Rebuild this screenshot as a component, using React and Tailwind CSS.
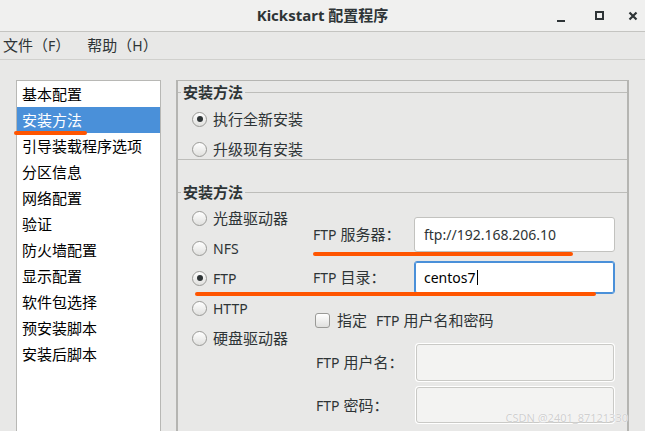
import React from "react";

const NAV = [
  "基本配置",
  "安装方法",
  "引导装载程序选项",
  "分区信息",
  "网络配置",
  "验证",
  "防火墙配置",
  "显示配置",
  "软件包选择",
  "预安装脚本",
  "安装后脚本",
];

const SOURCES = [
  { label: "光盘驱动器" },
  { label: "NFS", latin: true },
  { label: "FTP", latin: true, checked: true },
  { label: "HTTP", latin: true },
  { label: "硬盘驱动器" },
];

const Radio = ({ label, checked, latin }) => (
  <div className="flex h-[16px] items-center gap-[6px]">
    <span className="flex h-[15px] w-[15px] items-center justify-center rounded-full border border-[#9a9a97] bg-linear-to-b from-white to-[#e0e0de]">
      {checked ? <span className="h-[6px] w-[6px] rounded-full bg-[#2e3436]" /> : null}
    </span>
    <span className={latin ? "text-[14px]" : ""}>{label}</span>
  </div>
);

// small "FTP" prefix in labels uses the latin size
const Ftp = ({ children }) => (
  <>
    <span className="text-[14px]">FTP</span> {children}
  </>
);

export default function App() {
  return (
    <div className="relative flex h-[431px] w-[645px] flex-col overflow-hidden bg-[#e8e8e7] font-['Noto_Sans','Noto_Sans_CJK_SC',sans-serif] text-[15px] text-[#2e3436]">
      {/* Title bar */}
      <div className="grid h-[32px] shrink-0 grid-cols-[1fr_auto_1fr] items-center border-b border-[#c4c4c1] bg-[#f0f0ef]">
        <div />
        <div className="font-bold">Kickstart 配置程序</div>
        <div className="flex items-center justify-end">
          <span className="mr-[30px] mt-[10px] h-[2px] w-[8px] bg-[#2e3436]" />
          <span className="mr-[24px] h-[9px] w-[9px] border-2 border-[#2e3436]" />
          <svg width="10" height="10" viewBox="0 0 10 10" className="mr-[7px]">
            <path d="M1.5 1.5 L8.5 8.5 M8.5 1.5 L1.5 8.5" stroke="#2e3436" strokeWidth="2.2" />
          </svg>
        </div>
      </div>

      {/* Menu bar */}
      <div className="flex h-[28px] shrink-0 items-center gap-[17px] border-b border-[#d0d0cd] pl-[3px]">
        <span>文件（<span className="text-[14px]">F</span>）</span>
        <span>帮助（<span className="text-[14px]">H</span>）</span>
      </div>

      {/* Body */}
      <div className="flex flex-1 gap-[15px] pl-[16px] pt-[20px]">
        {/* Section list */}
        <div className="w-[145px] border border-b-0 border-[#b8b8b5] bg-white text-black">
          {NAV.map((item, i) => (
            <div
              key={item}
              className={`flex h-[26px] items-center pl-[5px] ${i === 1 ? "bg-[#4a90d9] text-white" : ""}`}
            >
              {item}
            </div>
          ))}
        </div>

        {/* Settings panel */}
        <div className="w-[453px] border-x-2 border-t border-[#b5b5b2]">
          {/* Frame 1 */}
          <div className="flex h-[22px] items-center">
            <span className="h-px w-[3px] bg-[#bdbdba]" />
            <span className="px-[2px] font-bold">安装方法</span>
            <span className="h-px flex-1 bg-[#bdbdba]" />
          </div>
          <div className="flex flex-col gap-[14px] border-b border-[#bdbdba] pb-[2px] pl-[14px] pt-[8px]">
            <Radio label="执行全新安装" checked />
            <Radio label="升级现有安装" />
          </div>

          {/* Frame 2 */}
          <div className="mt-[21px] flex h-[22px] items-center">
            <span className="h-px w-[3px] bg-[#bdbdba]" />
            <span className="px-[2px] font-bold">安装方法</span>
            <span className="h-px flex-1 bg-[#bdbdba]" />
          </div>
          <div className="flex">
            <div className="flex w-[135px] flex-col gap-[14px] pl-[14px] pt-[7px]">
              {SOURCES.map((s) => (
                <Radio key={s.label} {...s} />
              ))}
            </div>

            <div className="flex flex-col pt-[14px]">
              <div className="flex h-[35px] items-center">
                <span className="w-[101px]">
                  <Ftp>服务器：</Ftp>
                </span>
                <div className="flex h-[35px] w-[201px] items-center rounded-[3px] border border-[#c2c2bf] bg-white pl-[9px] text-[14px]">
                  ftp://192.168.206.10
                </div>
              </div>

              <div className="mt-[9px] flex h-[33px] items-center">
                <span className="w-[101px]">
                  <Ftp>目录：</Ftp>
                </span>
                <div className="flex h-[33px] w-[201px] items-center rounded-[3px] border border-[#4a90d9] bg-white pl-[9px] text-[14px] text-black shadow-[inset_0_0_0_1px_#4a90d9]">
                  centos7
                  <span className="ml-px h-[15px] w-px bg-black" />
                </div>
              </div>

              <div className="ml-[2px] mt-[18px] flex h-[16px] items-center gap-[7px]">
                <span className="h-[15px] w-[15px] rounded-[3px] border border-[#9a9a97] bg-linear-to-b from-white to-[#e0e0de]" />
                <span>
                  指定<span className="ml-[9px] text-[14px]">FTP</span> 用户名和密码
                </span>
              </div>

              <div className="mt-[16px] flex h-[37px] items-center pl-[3px]">
                <span className="w-[100px]">
                  <Ftp>用户名：</Ftp>
                </span>
                <div className="h-[37px] w-[198px] rounded-[3px] border border-[#c9c9c6] bg-[#f3f3f2] shadow-[0_0_0_1px_#ffffff]" />
              </div>

              <div className="mt-[6px] flex h-[36px] items-center pl-[3px]">
                <span className="w-[100px]">
                  <Ftp>密码：</Ftp>
                </span>
                <div className="h-[36px] w-[198px] rounded-[3px] border border-[#c9c9c6] bg-[#f3f3f2] shadow-[0_0_0_1px_#ffffff]" />
              </div>
            </div>
          </div>
        </div>
      </div>

      {/* Annotation strokes drawn over the screenshot */}
      <span className="absolute left-[14px] top-[131px] h-[4px] w-[73px] rounded-full bg-[#ff5500]" />
      <span className="absolute left-[313px] top-[252px] h-[4px] w-[260px] rounded-full bg-[#ff5500]" />
      <span className="absolute left-[195px] top-[292px] h-[4px] w-[401px] rounded-full bg-[#ff5500]" />

      {/* Watermark */}
      <span className="absolute bottom-[5px] right-[17px] text-[11px] text-[#cfcfcf] [text-shadow:0_0_1px_#ffffff,0_0_1px_#ffffff]">
        CSDN @2401_87121330
      </span>
    </div>
  );
}
